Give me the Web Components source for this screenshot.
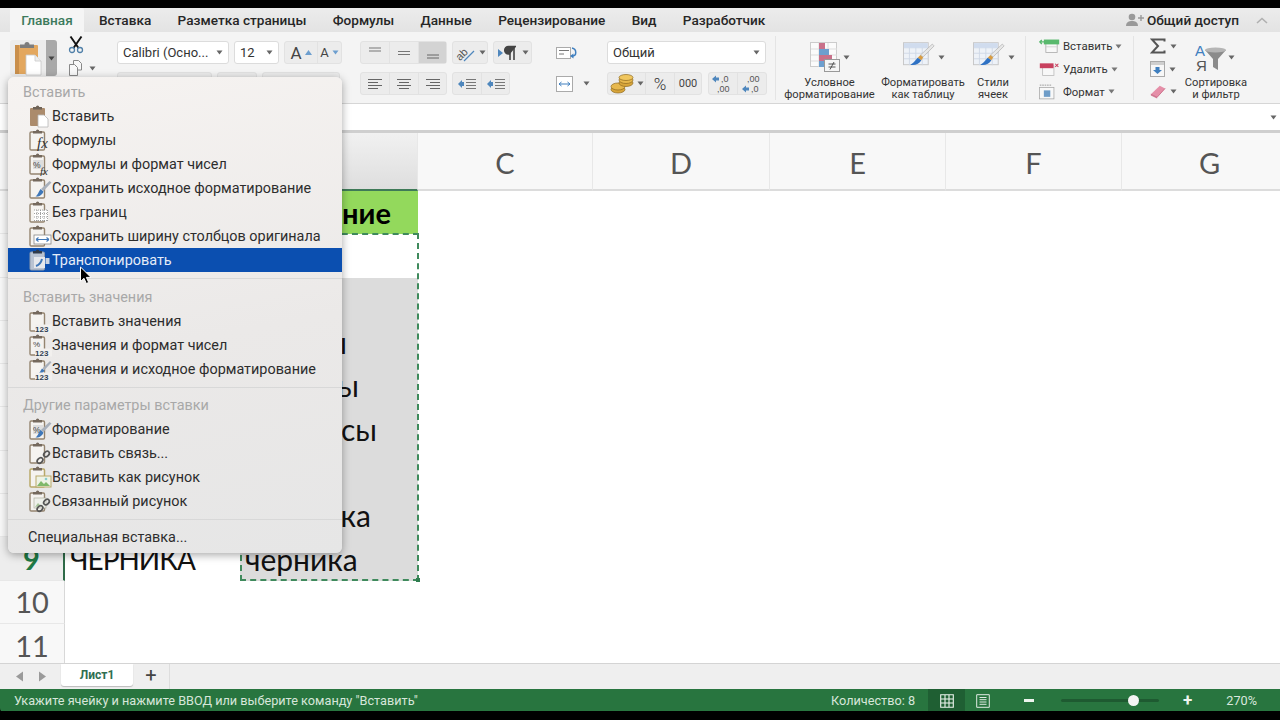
<!DOCTYPE html>
<html lang="ru"><head><meta charset="utf-8"><title>Excel</title>
<style>
html,body{margin:0;padding:0;background:#000;width:1280px;height:720px;overflow:hidden}
body{font-family:"Roboto","Liberation Sans",sans-serif}
</style></head><body>
<x-app>
  <x-tabs></x-tabs>
  <x-ribbon></x-ribbon>
  <x-formula></x-formula>
  <x-sheet></x-sheet>
  <x-sheetbar></x-sheetbar>
  <x-status></x-status>
  <x-paste-menu slot="over"></x-paste-menu>
</x-app>
<script>
const UI='"Roboto","Liberation Sans",sans-serif', CELL='"Lato","Open Sans",sans-serif';
const caret=(c='#666')=>`<svg width="7" height="5" viewBox="0 0 7 5"><path d="M.5 .5h6L3.5 4.5z" fill="${c}"/></svg>`;
const clipTop=(c='#75695d')=>`<path d="M5 5.500V3h3a1.600 1.600 0 0 1 3.200 0H14v2.500z" fill="${c}"/>`;
const base=(o='')=>`<svg width="24" height="24" viewBox="0 0 24 24"><rect x="2" y="4" width="14.500" height="18" rx="1.200" fill="#f5f3f0" stroke="#94846f" stroke-width="1.400"/>${clipTop()}${o}</svg>`;
const fxT=`<text x="9" y="20" font-family="Liberation Serif" font-style="italic" font-size="15" fill="#333">fx</text>`;
const pct=`<rect x="5" y="8" width="10" height="9" fill="#ddd"/><text x="5" y="15.500" font-family="Liberation Sans" font-size="8.500" fill="#444">%</text>`;
const n123=`<rect x="7" y="15.500" width="17" height="8" fill="#f2f0ee"/><text x="7" y="22.500" font-family="Liberation Sans" font-size="8" fill="#2f3f55" font-weight="bold">123</text>`;
const brush=`<path d="M21.500 5l2 1.500-8 8.500-2.500-2z" fill="#a8b0bb"/><path d="M12.500 13l3 2.500c-1 3-4 5.500-8 5 2-1 3-4.500 5-7.500z" fill="#3f77b8"/>`;
const link=`<g fill="none" stroke="#555" stroke-width="1.700"><ellipse cx="12" cy="19.500" rx="3.200" ry="2.300" transform="rotate(-45 12 19.500)"/><ellipse cx="18.500" cy="13" rx="3.200" ry="2.300" transform="rotate(-45 18.500 13)"/></g>`;
const pic=`<rect x="8" y="11" width="15" height="11" fill="#eef3e6" stroke="#b9a96a"/><path d="M9 21l4-5 3 3 2-2 4 4z" fill="#7fb86a"/><circle cx="18" cy="14" r="1.300" fill="#8cc"/>`;
const I={
 paste:`<svg width="24" height="24" viewBox="0 0 24 24"><rect x="2" y="4" width="15" height="18" rx="1" fill="#ab8b6c"/>${clipTop('#6f6357')}<path d="M10 11h6l4 4v8H10z" fill="#fff" stroke="#b8b8b8" stroke-width=".8"/></svg>`,
 fx:base(fxT),
 pctfx:base(pct+`<text x="12" y="23" font-family="Liberation Serif" font-style="italic" font-size="11" fill="#333">fx</text>`),
 keep:base(brush),
 noborder:base(`<path d="M6 10h14v11H6z" fill="#fff"/><path d="M6 10h14M6 13.500h14M6 17h14M6 20.500h14M9 10v11M12.500 10v11M16 10v11M19.500 10v11" stroke="#888" stroke-width=".8" stroke-dasharray="1 1"/>`),
 width:base(`<rect x="6" y="11" width="17" height="9" fill="#fff" stroke="#888" stroke-width=".8"/><path d="M8 15.500h13M8 15.500l2.500-2M8 15.500l2.500 2M21 15.500l-2.500-2M21 15.500l-2.500 2" stroke="#3f77b8" stroke-width="1.100" fill="none"/>`),
 trans:`<svg width="24" height="24" viewBox="0 0 24 24"><rect x="2" y="4" width="14.500" height="18" rx="1.200" fill="#b9c3d2" stroke="#8f9bad" stroke-width="1"/>${clipTop('#2f3a4a')}<rect x="6" y="9" width="11" height="11" fill="#e6e8ec"/><path d="M8 18c3-1 5-3 6-7" stroke="#3f77b8" stroke-width="2" fill="none"/><rect x="17.500" y="10" width="4" height="6" fill="#c9d3e2"/></svg>`,
 v123:base(n123),
 vpct:base(`<text x="5" y="14" font-family="Liberation Sans" font-size="8" fill="#444">%</text>`+n123),
 vkeep:base(`<path d="M22 4l1.500 1.200-7 7.800-2-1.700z" fill="#a8b0bb"/><path d="M14 11.500l2.500 2c-1 2.500-3.500 3.500-6 3 1.500-1 2-3 3.500-5z" fill="#3f77b8"/>`+n123),
 fmt:base(pct+brush),
 link:base(link),
 pic:`<svg width="24" height="24" viewBox="0 0 24 24"><rect x="2" y="4" width="14.500" height="18" rx="1.200" fill="#f5f3f0" stroke="#b9a96a" stroke-width="1.500"/>${clipTop()}${pic}</svg>`,
 piclink:base(`<rect x="6" y="9" width="12" height="10" fill="#eef0ea" stroke="#b0b0a0" stroke-width=".7"/><path d="M7 18l3-4 3 3z" fill="#a8c59a"/>`+link),
 bigpaste:`<svg width="30" height="36" viewBox="0 0 30 36"><rect x="2" y="5" width="23" height="29" rx="1" fill="#e3a75e"/><rect x="2" y="5" width="4" height="29" fill="#c98f4c"/><path d="M7 8V4.500h4.500a2.500 2.500 0 0 1 5 0H21V8z" fill="#7c7c7c"/><path d="M13 15h9l6 6v14H13z" fill="#fff" stroke="#c9c9c9" stroke-width=".8"/><path d="M22 15v6h6" fill="#eee" stroke="#c9c9c9" stroke-width=".8"/></svg>`,
 scissors:`<svg width="16" height="18" viewBox="0 0 16 18"><path d="M2.500 .5L10.500 12M13.500 .5L5.500 12" stroke="#111" stroke-width="1.900"/><circle cx="4" cy="14" r="2.500" fill="none" stroke="#4f7fa8" stroke-width="1.300"/><circle cx="12" cy="14" r="2.500" fill="none" stroke="#4f7fa8" stroke-width="1.300"/></svg>`,
 copy:`<svg width="15" height="16" viewBox="0 0 15 16"><path d="M5.500 .5h5l3 3V10h-8z" fill="#f8f8f8" stroke="#888"/><path d="M1.500 4.500h5l3 3v8h-8z" fill="#f8f8f8" stroke="#888"/></svg>`,
 vtop:`<svg width="16" height="14" viewBox="0 0 16 14"><path d="M2 2h12M2 5h12" stroke="#777"/></svg>`,
 vmid:`<svg width="16" height="14" viewBox="0 0 16 14"><path d="M2 5.500h12M2 8.500h12" stroke="#777"/></svg>`,
 vbot:`<svg width="16" height="14" viewBox="0 0 16 14"><path d="M2 9h12M2 12h12" stroke="#666"/></svg>`,
 orient:`<svg width="22" height="20" viewBox="0 0 22 20"><text x="2" y="15" font-family="Liberation Sans" font-size="11" fill="#555" transform="rotate(-45 8 12)">ab</text><path d="M10 18L20 8" stroke="#4f87bd" stroke-width="1.300"/></svg>`,
 para:`<svg width="22" height="16" viewBox="0 0 22 16"><path d="M1 4l5 4-5 4z" fill="#4f87bd"/><path d="M13 15V1.500M17 15V1.500M19 1.500h-7.500a3.500 3.500 0 0 0 0 7.500H13" stroke="#444" stroke-width="1.600" fill="#444"/></svg>`,
 left:`<svg width="16" height="12" viewBox="0 0 16 12"><path d="M1 1.500h14M1 4.500h10M1 7.500h14M1 10.500h10" stroke="#666"/></svg>`,
 center:`<svg width="16" height="12" viewBox="0 0 16 12"><path d="M1 1.500h14M3 4.500h10M1 7.500h14M3 10.500h10" stroke="#666"/></svg>`,
 right:`<svg width="16" height="12" viewBox="0 0 16 12"><path d="M1 1.500h14M5 4.500h10M1 7.500h14M5 10.500h10" stroke="#666"/></svg>`,
 indent:`<svg width="20" height="12" viewBox="0 0 20 12"><path d="M1 6l4-4v8z" fill="#4f87bd"/><rect x="3" y="4" width="4" height="4" fill="#4f87bd"/><path d="M9 1.500h10M9 4.500h10M9 7.500h10M9 10.500h10" stroke="#777"/></svg>`,
 wrap:`<svg width="22" height="16" viewBox="0 0 22 16"><rect x=".5" y="2.500" width="14" height="11" fill="#fff" stroke="#aaa"/><path d="M3 5.500h10M3 9h5" stroke="#777"/><path d="M16 3c5 1 5 8 0 8" stroke="#3f7fbf" stroke-width="1.500" fill="none"/><path d="M14 11l3.500-2.500v5z" fill="#3f7fbf"/></svg>`,
 merge:`<svg width="18" height="16" viewBox="0 0 18 16"><rect x=".5" y=".5" width="16" height="15" fill="#fff" stroke="#aaa"/><path d="M3 8h11M3 8l2.500-2M3 8l2.500 2M14 8l-2.500-2M14 8l-2.500 2" stroke="#3f7fbf" fill="none"/></svg>`,
 coins:`<svg width="24" height="20" viewBox="0 0 24 20"><g stroke="#8f6a1f" stroke-width=".7"><ellipse cx="8" cy="15.500" rx="7" ry="3.500" fill="#d8a53a"/><ellipse cx="8" cy="12.500" rx="7" ry="3.500" fill="#e7b84d"/><ellipse cx="16" cy="9" rx="7" ry="3.500" fill="#d8a53a"/><ellipse cx="16" cy="6" rx="7" ry="3.500" fill="#e7b84d"/><ellipse cx="16" cy="3.500" rx="7" ry="3" fill="#f0c65e"/></g></svg>`,
 dec1:`<svg width="24" height="20" viewBox="0 0 24 20"><path d="M1 5l4-3.500v7zM4 3.500h4v3H4z" fill="#4f87bd"/><text x="10" y="8" font-family="Liberation Sans" font-size="9" fill="#555">,0</text><text x="6" y="18" font-family="Liberation Sans" font-size="9" fill="#555">,00</text></svg>`,
 dec2:`<svg width="24" height="20" viewBox="0 0 24 20"><text x="7" y="8" font-family="Liberation Sans" font-size="9" fill="#555">,00</text><path d="M2 15l4-3.500v7zM5 13.500h4v3H5z" fill="#4f87bd"/><text x="11" y="18" font-family="Liberation Sans" font-size="9" fill="#555">,0</text></svg>`,
 cond:`<svg width="30" height="30" viewBox="0 0 30 30"><rect x=".5" y=".5" width="26" height="24" fill="#fbfbfb" stroke="#ccc"/><path d="M9 1v24M18 1v24M1 7h26M1 13h26M1 19h26" stroke="#ddd"/><rect x="9" y="1" width="6" height="6" fill="#c9718a"/><rect x="9" y="7" width="10" height="6" fill="#6d9fcf"/><rect x="9" y="13" width="13" height="6" fill="#c9718a"/><rect x="9" y="19" width="6" height="6" fill="#6d9fcf"/><rect x="14.500" y="17.500" width="15" height="12" fill="#f5f5f5" stroke="#999"/><path d="M18.500 22h7M18.500 25h7M24 20l-4 7.500" stroke="#444" stroke-width=".9"/></svg>`,
 table:`<svg width="33" height="28" viewBox="0 0 36 30"><rect x=".5" y=".5" width="27" height="24" fill="#eef2f8" stroke="#c5c5c5"/><path d="M7 1v24M14 1v24M21 1v24M1 6h27M1 12h27M1 18h27" stroke="#cfd8e6"/><rect x="1" y="1" width="26" height="5" fill="#d0dcee"/><path d="M32 2l2 2-12 12-3-2z" fill="#e7e7e7" stroke="#aaa" stroke-width=".7"/><path d="M19 14l3 2.500-2 3-4-2.500z" fill="#d89c42"/><path d="M16 17l4 2.500c-2 4-7 6-12 5 3-1 5-4 8-7.500z" fill="#2f72c4"/></svg>`,
 ins:`<svg width="21" height="18" viewBox="0 0 26 20"><rect x="8.500" y="4" width="14" height="14" fill="#f8f8f8" stroke="#aaa"/><path d="M8 11h14" stroke="#ccc"/><rect x="6" y="2" width="19" height="6" fill="#59b96d"/><path d="M7 5L1 5M3.500 2.500L1 5l2.500 2.500" stroke="#59b96d" stroke-width="1.600" fill="none"/></svg>`,
 del:`<svg width="21" height="18" viewBox="0 0 26 20"><rect x="4.500" y="6" width="14" height="12" fill="#f8f8f8" stroke="#bbb"/><rect x="1" y="3" width="17" height="6" fill="#c8405e"/><path d="M20 3.500l4 4M24 3.500l-4 4" stroke="#c8405e" stroke-width="1.300"/></svg>`,
 form:`<svg width="21" height="18" viewBox="0 0 26 20"><rect x=".5" y="4.500" width="18" height="14" fill="#f8f8f8" stroke="#aaa"/><rect x="6" y="8" width="8" height="8" fill="#6f9dc8"/><path d="M1 1.500h14" stroke="#888" stroke-dasharray="2 1"/></svg>`,
 sigma:`<svg width="16" height="16" viewBox="0 0 16 16"><path d="M14.500 3.500V1.500H2l6 6.500-6 6.500h12.500v-2" fill="none" stroke="#555" stroke-width="2"/></svg>`,
 fill:`<svg width="15" height="16" viewBox="0 0 15 16"><rect x=".5" y=".5" width="14" height="15" fill="#f7f7f7" stroke="#aaa"/><rect x="1" y="1" width="13" height="3" fill="#cfcfcf"/><path d="M5.500 6h4v3h2.500l-4.500 4-4.500-4h2.500z" fill="#3f7fbf"/></svg>`,
 eraser:`<svg width="16" height="15" viewBox="0 0 18 16"><path d="M1 11L11 1.500l6 3-9 10z" fill="#e58fa8"/><path d="M1 11l7 3.500 9-10" fill="none" stroke="#c96a85"/><path d="M1 11l7 3.500v1.500L1 12.500z" fill="#cf7590"/></svg>`,
 sort:`<svg width="31" height="32" viewBox="0 0 31 32"><text x="0" y="14" font-family="Liberation Sans" font-size="15" fill="#3f7fbf">А</text><text x="1" y="29" font-family="Liberation Sans" font-size="15" fill="#555">Я</text><path d="M10 8h21l-8 9v11l-5-3v-8z" fill="#8b8b8b"/><ellipse cx="20.500" cy="8" rx="10.500" ry="2.500" fill="#b5b5b5"/></svg>`,
 person:`<svg width="20" height="14" viewBox="0 0 20 14"><circle cx="7" cy="4" r="3.300" fill="#999"/><path d="M1 13c0-4 3-5 6-5s6 1 6 5z" fill="#999"/><path d="M16 2v6M13 5h6" stroke="#999" stroke-width="1.400"/></svg>`,
 chev:`<svg width="12" height="7" viewBox="0 0 12 7"><path d="M1 6l5-4.500L11 6" fill="none" stroke="#b0b0b0" stroke-width="1.600"/></svg>`,
 grid:`<svg width="14" height="14" viewBox="0 0 14 14"><path d="M.7 .7h12.600v12.600H.7zM.7 5h12.600M.7 9h12.600M5 .7v12.600M9 .7v12.600" fill="none" stroke="#eef5ef" stroke-width="1.100"/></svg>`,
 page:`<svg width="14" height="14" viewBox="0 0 14 14"><path d="M.7 .7h12.600v12.600H.7z" fill="none" stroke="#dfeae2" stroke-width="1"/><path d="M3.500 3.500h7M3.500 5.700h7M3.500 8h7M3.500 10.300h7" stroke="#dfeae2"/></svg>`
};
function ico(n){return I[n]}
class Base extends HTMLElement{
  constructor(){super();this.attachShadow({mode:'open'}).innerHTML=this.html();}
}
customElements.define('x-app',class extends Base{html(){return `<style>
:host{display:flex;flex-direction:column;width:1280px;height:703px;padding-top:8px;position:relative;overflow:hidden;background:#000;font-family:${UI}}
.over{position:absolute;left:8px;top:77px}
</style><slot></slot><div class="over"><slot name="over"></slot></div>`}});
customElements.define('x-tabs',class extends Base{html(){
 const t=['Вставка','Разметка страницы','Формулы','Данные','Рецензирование','Вид','Разработчик'];
 return `<style>
:host{display:flex;align-items:stretch;height:24px;background:linear-gradient(#ececec,#e3e3e3);padding-left:10px;font:500 13.600px ${UI};color:#262626;flex:none}
.a{width:74px;background:#f5f5f5;color:#3c7a5c;display:flex;align-items:center;justify-content:center;border-radius:2px 2px 0 0;margin-right:15px}
.t{display:flex;align-items:center;margin-right:26.400px;white-space:nowrap}
.r{margin-left:auto;display:flex;align-items:center;gap:2px;padding-right:12px}
.s{margin-right:15px}
</style><div class="a">Главная</div>${t.map(x=>`<div class="t">${x}</div>`).join('')}
<div class="r">${ico('person')}<span class="s">Общий доступ</span>${ico('chev')}</div>`}});
customElements.define('x-ribbon',class extends Base{html(){
 const b=(w,c,x='')=>`<div class="b ${x}" style="width:${w}px">${c}</div>`;
 const big=(w,icon,l1,l2,cg=4,ml=0)=>`<div class="big" style="width:${w}px"><div class="bi" style="gap:${cg}px;margin-left:${ml}px">${ico(icon)}${caret()}</div><div class="lb">${l1}<br>${l2}</div></div>`;
 const rowi=(icon,l)=>`<div class="ci">${ico(icon)}<span>${l}</span>${caret('#777')}</div>`;
 return `<style>
:host{display:flex;height:71px;flex:none;background:#f4f4f4;border-bottom:1px solid #d6d6d6;box-sizing:content-box;padding-left:10px;font:12px ${UI};color:#333;overflow:hidden}
.g{display:flex;flex-direction:column;gap:8px;padding-top:9px;box-sizing:border-box;flex:none}
.r{display:flex;gap:5px;height:23px;align-items:center}
.bg{display:flex;height:23px;background:#ececec;border:1px solid #e2e2e2;border-radius:3px;box-sizing:border-box}
.b{display:flex;align-items:center;justify-content:center;gap:3px;height:100%;border-right:1px solid #e2e2e2;box-sizing:border-box;flex:none}
.b:last-child{border-right:0}.p{background:#d3d3d3}
.sel{display:flex;align-items:center;height:23px;background:#fff;border:1px solid #dcdcdc;border-radius:3px;box-sizing:border-box;padding:0 5px;justify-content:space-between;font-size:13px;color:#333;white-space:nowrap}
.sep{width:1px;height:64px;margin-top:4px;background:#e4e4e4;flex:none}
.clip{display:flex;width:98px;padding-top:8px;height:36px;flex:none}
.pb{width:36px;height:36px;background:#ececec;border-radius:3px 0 0 3px;display:flex;align-items:center;justify-content:center}
.dd{width:11px;height:36px;background:#a9a9a9;display:flex;align-items:center;justify-content:center;border-radius:0 3px 3px 0}
.cc{margin-left:7px;display:flex;flex-direction:column;align-items:flex-start;padding-left:4px;gap:6px;margin-top:-4px}
.big{display:flex;flex-direction:column;align-items:center;flex:none;padding-top:10px;height:61px}
.bi{display:flex;align-items:flex-start;height:32px}.bi svg:last-child{margin-top:13px}
.lb{font-size:11.150px;line-height:12px;text-align:center;white-space:nowrap;margin-top:3px;color:#333}
.cells{display:flex;flex-direction:column;padding-top:3px;flex:none}
.ci{display:flex;align-items:center;height:23px;font-size:11.400px;gap:3px}
.ed{display:flex;flex-direction:column;padding-top:3px;flex:none;align-items:flex-start}
.ed div{display:flex;align-items:center;gap:4px;height:23px}
.A{font-size:17px;color:#444}.A2{font-size:13px;color:#444}
</style>
<div class="clip"><div class="pb">${ico('bigpaste')}</div><div class="dd">${caret('#444')}</div>
 <div class="cc">${ico('scissors')}<div style="display:flex;gap:6px;align-items:center">${ico('copy')}${caret()}</div></div></div>
<div class="g" style="margin-left:9px;width:225px">
 <div class="r"><div class="sel" style="width:112px">Calibri (Осно...${caret()}</div><div class="sel" style="width:45px">12${caret()}</div>
 <div class="bg" style="width:58px">${b(33,`<span class="A">A</span><svg width="7" height="5"><path d="M0 5h7L3.500 0z" fill="#6d9fcf"/></svg>`)}${b(23,`<span class="A2">A</span>${caret('#6d9fcf')}`)}</div></div>
 <div class="r"><div class="bg" style="width:95px"></div><div class="bg" style="width:40px"></div><div class="bg" style="width:78px"></div></div>
</div>
<div class="g" style="margin-left:18px;width:188px">
 <div class="r"><div class="bg" style="width:87px">${b(29,ico('vtop'))}${b(29,ico('vmid'))}${b(27,ico('vbot'),'p')}</div>
 <div class="bg" style="width:36px">${b(34,ico('orient')+caret())}</div><div class="bg" style="width:39px">${b(37,ico('para')+caret())}</div></div>
 <div class="r"><div class="bg" style="width:87px">${b(29,ico('left'))}${b(29,ico('center'))}${b(27,ico('right'))}</div>
 <div class="bg" style="width:58px">${b(29,ico('indent'))}${b(27,ico('indent'))}</div></div>
</div>
<div class="g" style="margin-left:8px;width:40px">
 <div class="r">${ico('wrap')}</div>
 <div class="r" style="gap:9px">${ico('merge')}${caret()}</div>
</div>
<div class="g" style="margin-left:11px;width:159px">
 <div class="r"><div class="sel" style="width:159px">Общий${caret()}</div></div>
 <div class="r"><div class="bg" style="width:95px">${b(38,ico('coins')+caret())}${b(29,'<span style="font-size:17px;font-weight:300;color:#333">%</span>')}${b(26,'<span style="font-size:11px;color:#444">000</span>')}</div>
 <div class="bg" style="width:59px;margin-left:1px">${b(29,ico('dec1'))}${b(28,ico('dec2'))}</div></div>
</div>
<div class="sep" style="margin-left:9px"></div>
<div style="margin-left:8px">${big(91,'cond','Условное','форматирование',3,1)}</div>
<div style="margin-left:6px">${big(84,'table','Форматировать','как таблицу',2,2)}</div>
<div style="margin-left:9px">${big(38,'table','Стили','ячеек',2,2)}</div>
<div class="sep" style="margin-left:13px"></div>
<div class="cells" style="margin-left:13px;width:94px">${rowi('ins','Вставить')}${rowi('del','Удалить')}${rowi('form','Формат')}</div>
<div class="sep" style="margin-left:0"></div>
<div class="ed" style="margin-left:16px;width:34px"><div>${ico('sigma')}${caret()}</div><div>${ico('fill')}${caret()}</div><div>${ico('eraser')}${caret()}</div></div>
<div style="margin-left:0">${big(64,'sort','Сортировка','и фильтр',2,-2)}</div>`}});
customElements.define('x-formula',class extends Base{html(){return `<style>
:host{display:flex;height:26px;flex:none;background:#fff;border-bottom:3px solid #cfcfcf;justify-content:flex-end;align-items:center;padding-right:3px}
</style>${caret('#666')}`}});
customElements.define('x-sheet',class extends Base{html(){
 const heads=['','','','C','D','E','F','G'];
 const at=(r,c)=>`grid-row:${r};grid-column:${c};`;
 let h=heads.map((c,i)=>`<div class="ch ${i==2?'act':''}" style="${at(1,i+1)}">${c}</div>`).join('');
 const frag={4:['ы',71],5:['ы',59],6:['сы',41],8:['ка',47]};
 let rows='';
 for(let r=1;r<=11;r++){
  const R=r+1;
  rows+=`<div class="rh ${r==9?'cur':''}" style="${at(R,1)}">${r>=9?r:''}</div>`;
  let a=`<div class="c" style="${at(R,2)}"></div>`,b=`<div class="c" style="${at(R,3)}"></div>`;
  if(r==1){a=`<div class="c hd" style="${at(R,2)}"></div>`;b=`<div class="c hd e" style="${at(R,3)}padding-right:27px">ние</div>`}
  else if(r==9){a=`<div class="c t u" style="${at(R,2)}">ЧЕРНИКА</div>`;b=`<div class="c gr t" style="${at(R,3)}">черника</div>`}
  else if(r>=3&&r<=8){const f=frag[r]||['',0];b=`<div class="c gr e" style="${at(R,3)}padding-right:${f[1]}px">${f[0]}</div>`}
  rows+=a+b;
 }
 return `<style>
:host{display:block;height:530px;flex:none;overflow:hidden;background:#fff}
.grid{display:grid;width:1298px;grid-template-columns:65px 175px 178px 175px 177px 176px 176px 176px;grid-template-rows:58px repeat(11,43.300px);font-family:${CELL};color:#111}
.ch{background:#f8f8f8;border-right:1px solid #e8e8e8;border-bottom:2px solid #dcdcdc;display:flex;align-items:center;justify-content:center;font-size:29px;color:#555;box-sizing:border-box;padding-top:2px}
.act{background:linear-gradient(#f1f1f1,#dedede);border-bottom:2px solid #3f7a58}
.rh{background:#f8f8f8;border-bottom:1px solid #e8e8e8;border-right:1px solid #d8d8d8;display:flex;align-items:center;justify-content:center;font-size:29px;color:#555;box-sizing:border-box}
.cur{color:#1f7a45;font-weight:700;background:#ededed;border-right:2px solid #2f6b48}
.c{display:flex;align-items:center;font-size:30px;min-width:0;white-space:nowrap;padding-bottom:1px;box-sizing:border-box}
.t{padding-left:5px}
.u{font-size:28px;letter-spacing:-1px}
.hd{background:#93d95c;font-weight:700;font-size:29px;color:#000}
.e{justify-content:flex-end}
.gr{background:#dcdcdc}
.ants{grid-column:3;grid-row:3/11;border:2px dashed #3f8a5c;position:relative;pointer-events:none;margin:-1px -1px 0 0}
.ants i{position:absolute;right:-3px;bottom:-3px;width:4px;height:4px;background:#2f7d4f}
</style><div class="grid">${h}${rows}<div class="ants"><i></i></div></div>`}});
customElements.define('x-sheetbar',class extends Base{html(){return `<style>
:host{display:flex;align-items:stretch;height:25px;flex:none;background:#efefef;border-top:1px solid #d4d4d4;font:700 12px ${UI};color:#2f6e50}
.a{width:61px;display:flex;align-items:center;justify-content:center;gap:14px}
.tab{width:72px;background:#fff;border-radius:0 0 3px 3px;box-shadow:0 1px 1px #bbb;display:flex;align-items:center;justify-content:center;margin-bottom:3px}
.pl{width:37px;border-right:1px solid #ddd;display:flex;align-items:center;justify-content:center;color:#444;font:400 20px ${UI};padding-bottom:3px;box-sizing:border-box}
</style><div class="a"><svg width="9" height="11"><path d="M8 .5v10L1 5.500z" fill="#9a9a9a"/></svg><svg width="9" height="11"><path d="M1 .5v10l7-5z" fill="#9a9a9a"/></svg></div><div class="tab">Лист1</div><div class="pl">+</div>`}});
customElements.define('x-status',class extends Base{html(){return `<style>
:host{display:flex;align-items:center;height:23px;flex:none;background:#28753f;border-radius:0 0 0 4px;color:#d7e6da;font:12.700px ${UI};padding-left:14px;box-sizing:border-box;white-space:nowrap}
.q{margin-left:auto;margin-right:13px}
.on{width:37px;height:23px;background:#1f5f33;display:flex;align-items:center;justify-content:center}
.pg{width:35px;display:flex;justify-content:center}
.m{width:10px;height:2.500px;background:#eef5ef;margin:0 27px 0 24px}
.sl{width:98px;height:3px;background:#1e5a31;border-radius:2px;position:relative}
.sl i{position:absolute;left:67px;top:-4.500px;width:11px;height:11px;border-radius:50%;background:#f4f4f4}
.pl{margin-left:24px;color:#eef5ef;font-size:17px;font-weight:700;line-height:1}
.z{margin-left:34px;margin-right:23px;color:#dbe8de}
</style><span>Укажите ячейку и нажмите ВВОД или выберите команду "Вставить"</span><span class="q">Количество: 8</span><div class="on">${ico('grid')}</div><div class="pg">${ico('page')}</div><div class="m"></div><div class="sl"><i></i></div><span class="pl">+</span><span class="z">270%</span>`}});
customElements.define('x-menu-item',class extends Base{html(){return `<style>
:host{display:flex;align-items:center;height:24px;padding-left:20px;white-space:nowrap;font:14.400px ${UI};color:#2d2d2d}
:host([active]){background:#0b4fb0;color:#e4ecf8}
.i{width:24px;height:24px;flex:none;display:flex}
:host([noicon]) .i{display:none}
</style><span class="i">${ico(this.getAttribute('icon')||'paste')}</span><slot></slot>`}});
customElements.define('x-paste-menu',class extends Base{html(){
 const it=(i,t,a='')=>`<x-menu-item icon="${i}" ${a}>${t}</x-menu-item>`;
 return `<style>
:host{display:block;width:334px;height:476px;box-sizing:border-box;padding-top:3px;background:linear-gradient(170deg,#f6f3f1,#ebe9e8 55%,#e6e6e6);border-radius:6px;box-shadow:0 2px 8px rgba(0,0,0,.35);font-family:${UI}}
.h{height:24px;display:flex;align-items:center;padding-left:15px;font-size:14.400px;color:#a8a8a8}
.s{height:13px;display:flex;align-items:center}.s i{display:block;height:1px;width:100%;background:#d8d8d8}
.s2{height:12px}
</style>
<div class="h">Вставить</div>
${it('paste','Вставить')}${it('fx','Формулы')}${it('pctfx','Формулы и формат чисел')}${it('keep','Сохранить исходное форматирование')}${it('noborder','Без границ')}${it('width','Сохранить ширину столбцов оригинала')}${it('trans','Транспонировать','active')}
<div class="s"><i></i></div>
<div class="h">Вставить значения</div>
${it('v123','Вставить значения')}${it('vpct','Значения и формат чисел')}${it('vkeep','Значения и исходное форматирование')}
<div class="s s2"><i></i></div>
<div class="h">Другие параметры вставки</div>
${it('fmt','Форматирование')}${it('link','Вставить связь...')}${it('pic','Вставить как рисунок')}${it('piclink','Связанный рисунок')}
<div class="s s2"><i></i></div>
<x-menu-item noicon>Специальная вставка...</x-menu-item>
<svg style="position:absolute;left:71px;top:189px" width="13" height="20" viewBox="0 0 13 20"><path d="M1.500 1v14.500l3.500-3.200 2.300 5.200 2.400-1-2.300-5.100h4.600z" fill="#000" stroke="#fff" stroke-width="1"/></svg>`}});
</script>
</body></html>
